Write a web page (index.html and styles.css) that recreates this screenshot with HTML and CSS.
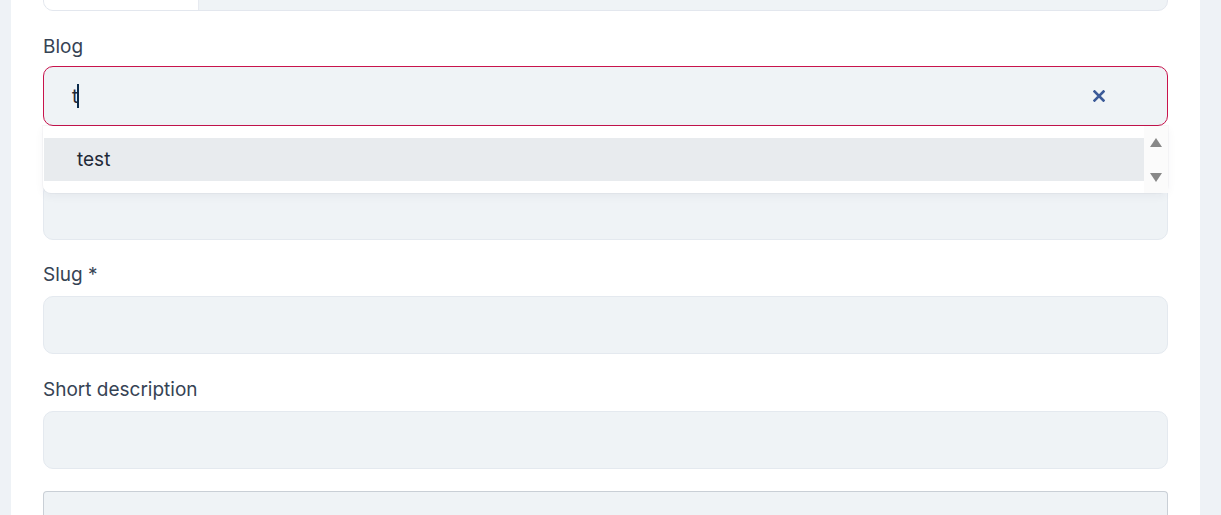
FILE: index.html
```html
<!DOCTYPE html>
<html lang="en">
<head>
<meta charset="utf-8">
<title>Post form</title>
<link rel="stylesheet" href="styles.css">
</head>
<body>
<div class="page">
  <main class="panel">
    <div class="file-input">
      <span class="file-btn"></span>
      <span class="file-name"></span>
    </div>

    <div class="field field-blog">
      <label class="label">Blog</label>
      <div class="select">
        <div class="select-control">
          <span class="select-value">t</span><span class="caret"></span>
          <svg class="clear" width="12" height="12" viewBox="0 0 12 12"><path d="M1.5 1.5L10.5 10.5M10.5 1.5L1.5 10.5" stroke="#3b5a98" stroke-width="2.6" stroke-linecap="square"/></svg>
        </div>
        <div class="dropdown">
          <ul class="options">
            <li class="option active">test</li>
          </ul>
          <div class="scrollbar">
            <svg width="12" height="9" viewBox="0 0 12 9"><path d="M6 0L12 9H0Z" fill="#888"/></svg>
            <svg width="12" height="9" viewBox="0 0 12 9"><path d="M0 0H12L6 9Z" fill="#888"/></svg>
          </div>
        </div>
      </div>
    </div>

    <div class="field">
      <div class="label label-hidden"></div>
      <div class="input"></div>
    </div>

    <div class="field">
      <label class="label">Slug *</label>
      <div class="input"></div>
    </div>

    <div class="field field-desc">
      <label class="label">Short description</label>
      <div class="input"></div>
    </div>

    <div class="editor">
      <div class="toolbar"></div>
    </div>
  </main>
</div>
</body>
</html>
```

FILE: styles.css
```css
* { box-sizing: border-box; }
html, body {
  margin: 0;
  height: 100%;
  overflow: hidden;
  background: #eef2f6;
  font-family: Inter, "Noto Sans", sans-serif;
}
.page {
  display: flex;
  padding: 0 21px 0 11px;
  height: 515px;
}
.panel {
  flex: 1;
  background: #fff;
  padding: 0 32px;
  display: flex;
  flex-direction: column;
}
.panel > * { flex-shrink: 0; }
.file-input {
  margin-top: -48px;
  height: 59px;
  display: flex;
  border: 1px solid #e3e7ee;
  border-radius: 10px;
  overflow: hidden;
  background: #eff3f6;
}
.file-btn {
  width: 155px;
  background: #fff;
  border-right: 1px solid #e7eaf0;
}
.file-name { flex: 1; }

.field {
  margin-top: 23px;
  display: flex;
  flex-direction: column;
}
.label {
  font-size: 19px;
  line-height: 24px;
  height: 24px;
  color: #364354;
  margin-bottom: 9px;
}
.field-blog { margin-top: 24px; }
.field-blog .label { margin-bottom: 7px; }
.field-desc { margin-top: 24px; }
.input {
  height: 58px;
  background: #eff3f6;
  border: 1px solid #e4e9ef;
  border-radius: 10px;
}
.select { position: relative; }
.select-control {
  height: 60px;
  border: 1px solid #c8134c;
  border-radius: 10px;
  background: #eff3f6;
  display: flex;
  align-items: center;
  padding: 0 62px 0 28px;
}
.select-value {
  font-size: 19px;
  color: #1f2937;
}
.caret {
  display: inline-block;
  width: 2px;
  height: 24px;
  background: #0b2a4a;
  margin-left: -1px;
}
.clear { margin-left: auto; }

.dropdown {
  position: absolute;
  left: 0;
  right: 0;
  top: 60px;
  height: 67px;
  background: #fff;
  border-radius: 0 0 8px 8px;
  box-shadow: 0 3px 10px rgba(30, 45, 70, 0.05), 0 0 0 1px rgba(30, 45, 70, 0.03);
  display: flex;
  z-index: 2;
}
.options {
  list-style: none;
  margin: 0;
  padding: 12px 0 0 1px;
  flex: 1;
}
.option {
  height: 43px;
  line-height: 43px;
  padding-left: 33px;
  font-size: 19px;
  color: #1f2937;
}
.option.active { background: #e8ebee; }
.scrollbar {
  width: 24px;
  background: #fbfbfb;
  display: flex;
  flex-direction: column;
  align-items: center;
  justify-content: space-between;
  padding: 12px 0 11px;
}

.editor {
  margin-top: 22px;
  height: 24px;
  border: 1px solid #c9cfd6;
  border-bottom: 0;
  border-radius: 4px 4px 0 0;
  background: #eff3f6;
}
```
